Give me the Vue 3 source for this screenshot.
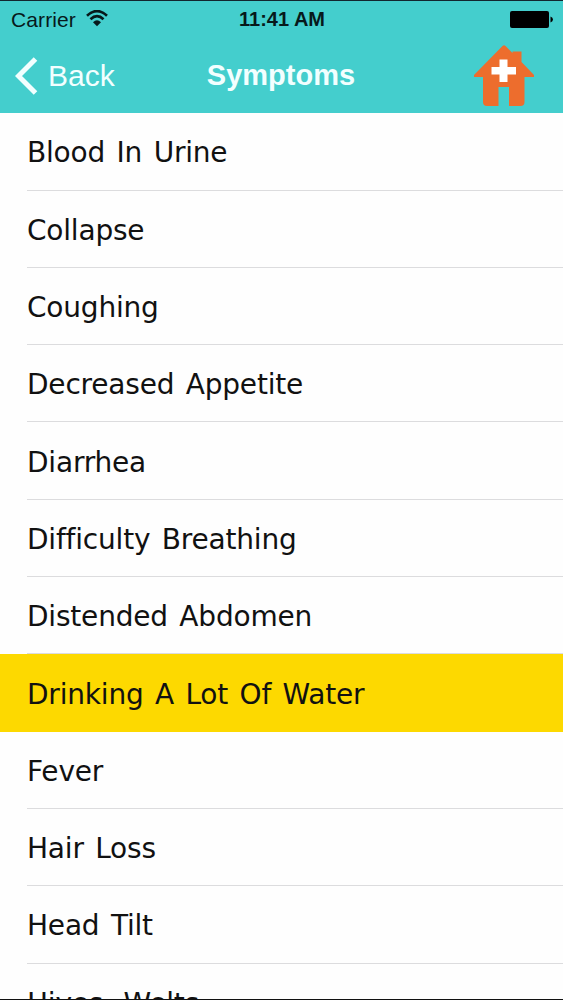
<script setup>
import { ref } from 'vue';

const symptoms = [
  'Blood In Urine',
  'Collapse',
  'Coughing',
  'Decreased Appetite',
  'Diarrhea',
  'Difficulty Breathing',
  'Distended Abdomen',
  'Drinking A Lot Of Water',
  'Fever',
  'Hair Loss',
  'Head Tilt',
  'Hives, Welts'
];

const selected = ref('Drinking A Lot Of Water');
</script>

<template>
  <div class="screen">
    <header class="header">
      <div class="status-bar">
        <div class="carrier">
          <span>Carrier</span>
          <svg class="wifi" viewBox="0 0 22 17">
            <path d="M1 5.7Q11 -3.5 21 5.7" />
            <path d="M4.5 9.2Q11 3.2 17.5 9.2" />
            <path class="dot" d="M7 12.2Q11 8.4 15 12.2L11 16.2Z" />
          </svg>
        </div>
        <span class="time">11:41 AM</span>
        <svg class="battery" viewBox="0 0 43 17">
          <rect x="0" y="0" width="39" height="17" rx="2" />
          <path d="M40.5 5.5Q43 6.3 43 8.5T40.5 11.5Z" />
        </svg>
      </div>

      <nav class="nav-bar">
        <button class="back" type="button">
          <svg class="chevron" viewBox="0 0 23 38">
            <path d="M20.5 2L3.5 19L20.5 36" />
          </svg>
          <span>Back</span>
        </button>
        <h1 class="title">Symptoms</h1>
        <button class="home" type="button" aria-label="Home">
          <svg viewBox="0 0 60 62">
            <path
              class="house"
              d="M28.5 1Q30 -0.5 31.5 1L38.5 8V6.5H47.5V17L60 30V32H50.5V57Q50.5 61 46.5 61H35V42H24.5V61H13Q9 61 9 57V32H0V30Z"
            />
            <path class="cross" d="M25.5 14.5H33.5V22H42V29.5H33.5V37H25.5V29.5H17.5V22H25.5Z" />
          </svg>
        </button>
      </nav>
    </header>

    <ul class="list">
      <li
        v-for="symptom in symptoms"
        :key="symptom"
        class="row"
        :class="{ selected: symptom === selected }"
        @click="selected = symptom"
      >
        <span class="label">{{ symptom }}</span>
      </li>
    </ul>
  </div>
</template>

<style>
body {
  margin: 0;
}
</style>

<style scoped>
.screen {
  display: flex;
  flex-direction: column;
  box-sizing: border-box;
  height: 1000px;
  overflow: hidden;
  border-top: 1px solid #12262f;
  border-bottom: 1px solid #111;
  background-color: #fefefe;
}

.header {
  flex: none;
  height: 112.3px;
  background-color: #44cecd;
  font-family: "Liberation Sans", Arial, sans-serif;
}

.status-bar {
  display: grid;
  grid-template-columns: 1fr auto 1fr;
  align-items: center;
  height: 37px;
  padding: 0 10px 0 11px;
  color: #07191b;
  font-size: 21px;
}

.carrier {
  display: flex;
  align-items: center;
  gap: 10px;
  letter-spacing: 0.1px;
}

.wifi {
  width: 22px;
  height: 17px;
  margin-top: -2px;
  fill: none;
  stroke: #07191b;
  stroke-width: 2.7;
}

.wifi .dot {
  fill: #07191b;
  stroke: none;
}

.time {
  font-weight: bold;
  font-size: 20px;
}

.battery {
  justify-self: end;
  width: 43px;
  height: 17px;
  fill: #000;
}

.nav-bar {
  display: grid;
  grid-template-columns: 1fr auto 1fr;
  align-items: center;
  height: 75px;
  padding: 0 29px 0 15px;
  color: #f2ffff;
}

.back,
.home {
  display: flex;
  align-items: center;
  padding: 0;
  border: 0;
  background: none;
  color: inherit;
  font: inherit;
}

.back {
  gap: 10px;
  font-size: 30px;
}

.chevron {
  width: 23px;
  height: 38px;
  fill: none;
  stroke: #f2ffff;
  stroke-width: 5;
}

.title {
  margin: 0 0 0 13px;
  font-size: 29px;
}

.home {
  justify-self: end;
}

.home svg {
  width: 60px;
  height: 62px;
}

.house {
  fill: #ed6d2d;
}

.cross {
  fill: #fff;
}

.list {
  flex: none;
  margin: 0;
  padding: 0;
  list-style: none;
  font-family: Verdana, "DejaVu Sans", sans-serif;
  font-size: 28px;
  letter-spacing: -0.2px;
  word-spacing: 2.8px;
  color: #111;
}

.row {
  height: 77.3px;
  padding-left: 27px;
}

.label {
  display: flex;
  align-items: center;
  box-sizing: border-box;
  height: 100%;
  padding-top: 3px;
  border-bottom: 1px solid #dcdcde;
}

.row.selected {
  background-color: #fdd900;
}

.row.selected .label {
  border-color: transparent;
}
</style>
